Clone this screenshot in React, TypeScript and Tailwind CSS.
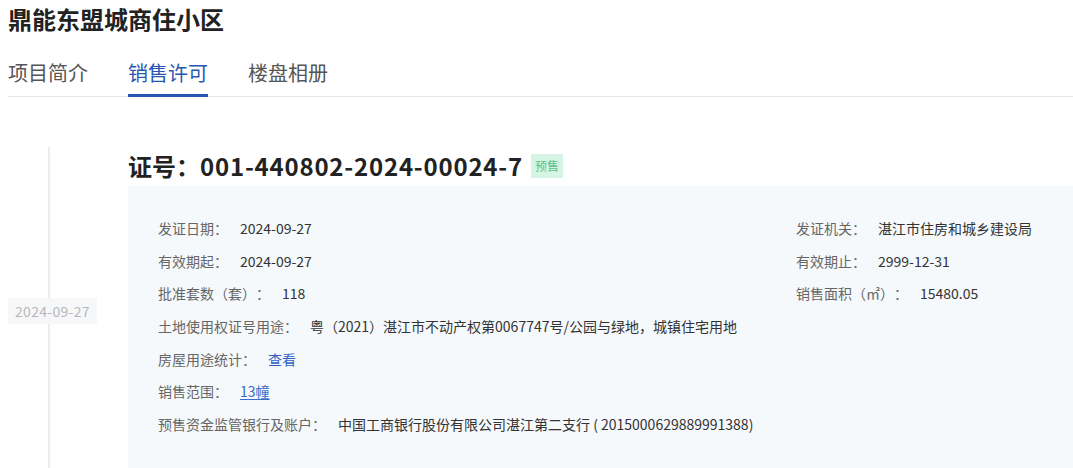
const font = { fontFamily: '"Noto Sans CJK SC", "Noto Sans", sans-serif' };

function Field({ label, children }: { label: string; children: React.ReactNode }) {
  return (
    <div className="flex items-center whitespace-nowrap">
      <span className="mr-3 text-[#666]">{label}</span>
      <span className="text-[#333]">{children}</span>
    </div>
  );
}

export default function App() {
  return (
    <div className="min-h-screen bg-white pl-2 [text-spacing-trim:space-all]" style={font}>
      <h1 className="pt-[3px] text-[24px] font-bold leading-8 text-[#222]">鼎能东盟城商住小区</h1>

      <div className="mt-6 flex gap-10 border-b border-[#e6e6e6] text-[20px] leading-7">
        <div className="-mb-px border-b-[3px] border-transparent pb-[7px] text-[#555]">项目简介</div>
        <div className="-mb-px border-b-[3px] border-[#2857b3] pb-[7px] text-[#2857b3]">销售许可</div>
        <div className="-mb-px border-b-[3px] border-transparent pb-[7px] text-[#555]">楼盘相册</div>
      </div>

      <div className="mt-[50px] flex">
        <div className="relative w-[120px] shrink-0">
          <div className="absolute bottom-0 left-[40px] top-0 w-[2px] bg-[#ececec]" />
          <div className="absolute left-0 top-[151px] w-[89px] bg-[#f6f7f9] py-[3px] text-center text-[14px] leading-5 tracking-[0.3px] text-[#b8b8b8]">
            2024-09-27
          </div>
        </div>

        <div className="flex-1">
          <div className="flex items-center pt-[3px]">
            <span className="text-[24px] font-bold leading-8 text-[#222]">
              证号：<span className="tracking-[0.8px]">001-440802-2024-00024-7</span>
            </span>
            <span className="ml-2 bg-[#d6f5e4] px-1 text-[12px] leading-6 text-[#5cbf8c]">预售</span>
          </div>

          <div className="mt-1 bg-[#f5f9fc] pb-[40px] pl-[30px] pt-[26px] text-[14px]">
            <div className="flex h-[32.7px] items-center">
              <div className="flex-1">
                <Field label="发证日期：">2024-09-27</Field>
              </div>
              <div className="w-[277px]">
                <Field label="发证机关：">湛江市住房和城乡建设局</Field>
              </div>
            </div>
            <div className="flex h-[32.7px] items-center">
              <div className="flex-1">
                <Field label="有效期起：">2024-09-27</Field>
              </div>
              <div className="w-[277px]">
                <Field label="有效期止：">2999-12-31</Field>
              </div>
            </div>
            <div className="flex h-[32.7px] items-center">
              <div className="flex-1">
                <Field label="批准套数（套）：">118</Field>
              </div>
              <div className="w-[277px]">
                <Field label="销售面积（㎡）：">15480.05</Field>
              </div>
            </div>
            <div className="flex h-[32.7px] items-center">
              <Field label="土地使用权证号用途：">粤（2021）湛江市不动产权第0067747号/公园与绿地，城镇住宅用地</Field>
            </div>
            <div className="flex h-[32.7px] items-center">
              <Field label="房屋用途统计：">
                <span className="text-[#2f62c4]">查看</span>
              </Field>
            </div>
            <div className="flex h-[32.7px] items-center">
              <Field label="销售范围：">
                <span className="text-[#3a6cc8] underline underline-offset-2">13幢</span>
              </Field>
            </div>
            <div className="flex h-[32.7px] items-center">
              <Field label="预售资金监管银行及账户：">中国工商银行股份有限公司湛江第二支行 ( 2015000629889991388)</Field>
            </div>
          </div>
        </div>
      </div>
    </div>
  );
}
